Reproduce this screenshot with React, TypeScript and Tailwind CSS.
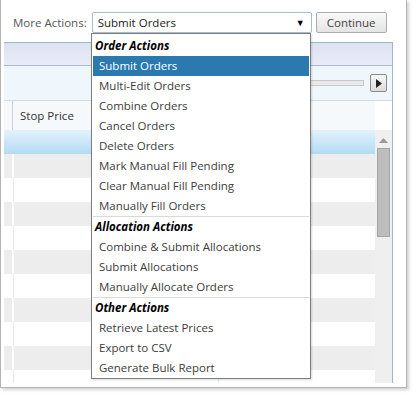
import React from 'react'

const orderActions = [
  'Submit Orders',
  'Multi-Edit Orders',
  'Combine Orders',
  'Cancel Orders',
  'Delete Orders',
  'Mark Manual Fill Pending',
  'Clear Manual Fill Pending',
  'Manually Fill Orders',
]
const allocationActions = ['Combine & Submit Allocations', 'Submit Allocations', 'Manually Allocate Orders']
const otherActions = ['Retrieve Latest Prices', 'Export to CSV', 'Generate Bulk Report']

const MenuHeader = ({ label }: { label: string }) => (
  <div className="mx-[1px] h-[20px] pl-[2px] leading-[20px] font-bold italic text-black">{label}</div>
)

const MenuItem = ({ label, active }: { label: string; active?: boolean }) => (
  <div
    className={
      active
        ? 'mx-[1px] h-[20px] pl-[6px] leading-[20px] bg-[#2a7ab0] text-white'
        : 'mx-[1px] h-[20px] pl-[6px] leading-[20px] text-[#3c3c3c]'
    }
  >
    {label}
  </div>
)

const Separator = () => <div className="mx-[1px] h-[1px] bg-[#d9d9d9]" />

export default function App() {
  const rows = Array.from({ length: 10 }, (_, i) => i)

  return (
    <div
      className="relative w-[417px] h-[397px] bg-white text-[11.5px]"
      style={{ fontFamily: '"Open Sans", "Noto Sans", sans-serif' }}
    >
      {/* window frame */}
      <div className="w-[407px] h-[388px] border-l border-r border-b border-[#b3b3b3] bg-white shadow-[2px_2px_3px_rgba(0,0,0,0.18)]">
        {/* action bar */}
        <div className="flex items-center pt-[12px] pl-[12px]">
          <span className="text-[#555]">More Actions:</span>
          <div className="ml-[5px] flex h-[21px] w-[220px] items-center justify-between rounded-[2px] border border-[#a7bdd3] pl-[5px] pr-[6px] text-[#222]">
            <span>Submit Orders</span>
            <span className="text-[9px] text-black">▼</span>
          </div>
          <button className="ml-[4px] h-[21px] w-[71px] rounded-[2px] border border-[#acacac] bg-gradient-to-b from-[#f9f9f9] to-[#e4e4e4] text-[#444]">
            Continue
          </button>
        </div>

        {/* grid */}
        <div className="ml-[3px] mt-[9px] w-[389px] h-[341px] border-t border-r border-[#9db6c9] flex flex-col overflow-hidden">
          <div className="h-[23px] shrink-0 border-b border-[#a9bccb] bg-gradient-to-b from-[#dde2f1] to-[#e9ecf7]" />
          <div className="h-[34px] shrink-0 bg-[#eff6fc] flex items-center">
            <div className="ml-[96px] h-[6px] w-[264px] border border-[#c9c9c9] bg-[#e9e9e9]" />
            <div className="ml-[6px] flex h-[18px] w-[17px] items-center justify-center rounded-[2px] border border-[#8a8a8a] bg-gradient-to-b from-[#f7f7f7] to-[#dcdcdc]">
              <svg width="6" height="9" viewBox="0 0 6 9">
                <path d="M0 0 L6 4.5 L0 9 Z" fill="#222" />
              </svg>
            </div>
          </div>
          {/* column header */}
          <div className="flex h-[30px] shrink-0 border-t border-[#d3dbe3]">
            <div className="flex w-[371px] bg-[#f6f9fc]">
              <div className="w-[9px] border-r border-[#cfcfcf]" />
              <div className="flex items-center pl-[7px] text-[#333]">Stop Price</div>
            </div>
            <div className="flex-1 bg-white" />
          </div>
          {/* body */}
          <div className="flex min-h-0 flex-1 overflow-hidden">
            <div className="w-[371px] flex flex-col">
              <div className="h-[24px] shrink-0 bg-gradient-to-b from-[#e2f2fc] to-[#b3dbf3]" />
              {rows.map((i) =>
                i % 2 === 0 ? (
                  <div key={i} className="flex h-[24px] shrink-0 bg-[#ededed]">
                    <div className="w-[8px]" />
                    <div className="w-[2px] bg-white" />
                    <div className="flex-1" />
                  </div>
                ) : (
                  <div key={i} className="flex h-[24px] shrink-0 bg-white">
                    <div className="w-[9px]" />
                    <div className="w-[1px] bg-[#e8e8e8]" />
                    <div className="w-[204px]" />
                    <div className="w-[1px] bg-[#ececec]" />
                    <div className="flex-1" />
                  </div>
                )
              )}
            </div>
            {/* vertical scrollbar */}
            <div className="flex w-[17px] flex-col items-center bg-[#efefef]">
              <svg className="mt-[8px]" width="9" height="5" viewBox="0 0 9 5">
                <path d="M0 5 L4.5 0 L9 5 Z" fill="#9a9a9a" />
              </svg>
              <div className="mt-[5px] h-[89px] w-[13px] border border-[#a5a5a5] bg-[#bdbdbd]" />
            </div>
          </div>
        </div>
      </div>

      {/* dropdown list */}
      <div className="absolute left-[91px] top-[33px] w-[220px] h-[346px] border border-[#7d7d7d] bg-white pt-[2px] shadow-[1px_1px_2px_rgba(0,0,0,0.15)]">
        <MenuHeader label="Order Actions" />
        {orderActions.map((a, i) => (
          <MenuItem key={a} label={a} active={i === 0} />
        ))}
        <Separator />
        <MenuHeader label="Allocation Actions" />
        {allocationActions.map((a) => (
          <MenuItem key={a} label={a} />
        ))}
        <Separator />
        <MenuHeader label="Other Actions" />
        {otherActions.map((a) => (
          <MenuItem key={a} label={a} />
        ))}
      </div>
    </div>
  )
}
